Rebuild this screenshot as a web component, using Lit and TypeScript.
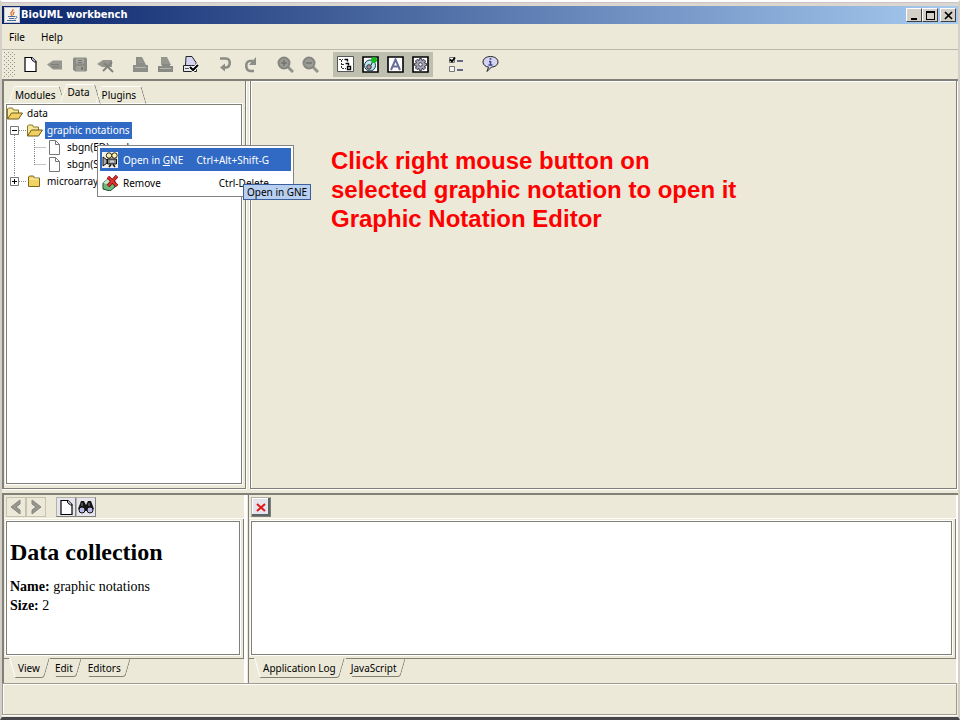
import { LitElement, html, svg, css, nothing, TemplateResult } from "lit";
import { customElement, property, state } from "lit/decorators.js";
import { classMap } from "lit/directives/class-map.js";

const ICONS: Record<string, TemplateResult> = {
  java: svg`<rect width="16" height="16" fill="#f4f2ec"/><path d="M.5 15.500V.5h15v15z" fill="none" stroke="#c4c8d4"/><path d="M9 2c1 2-3 3-2 5s1 1 1 2M10.500 5C9 6 9 7 9.500 8" fill="none" stroke="#e0702c" stroke-width="1.300"/><path d="M4 9.500h7M5 11.500h5M3 13.500h9M11.500 9.500c3 0 1 2-1 2.500" fill="none" stroke="#4a6a9c"/>`,
  doc: svg`<path d="M3 1.500h7l4 4v10H3z" fill="#fff" stroke="#000" stroke-width="1.200"/><path d="M10 1.500l4 4h-4z" fill="#c8c8e8"/><path d="M9.500 1.500v2l3 2.500h1.500" fill="none" stroke="#000"/>`,
  open: svg`<path d="M0 8.500l6-4 9 0v9H6z" fill="#96968e"/><path d="M4 8.500h8M5 11h7" stroke="#7e7e78"/>`,
  save: svg`<path d="M1 2.500l1-1h12l1 1v12l-1 1H3l-2-2z" fill="#8c8c86"/><path d="M4 2.500h8v5H4z" fill="#a6a69e"/><path d="M6 4.500h4M6 6.500h4" stroke="#787872"/><path d="M4 10h8v5H4z" fill="#a0a098"/><path d="M9 11h2v3H9z" fill="#787872"/>`,
  saveAs: svg`<path d="M0 8l6-4h9v7H5z" fill="#96968e"/><path d="M6 15l9-9M7 7l9 9" stroke="#82827c" stroke-width="2"/>`,
  print: svg`<path d="M4 1h6l4 8H4z" fill="#8e8e88"/><path d="M1 9h15v7H1z" fill="#8e8e88"/><path d="M3 11.500h11" stroke="#b6b6ac"/><path d="M6 4h4M6 6h5" stroke="#a0a098"/>`,
  preview: svg`<path d="M4 1h6l4 8H4z" fill="#96968e"/><path d="M1 10h4V8h8v2h3v6H1z" fill="#8a8a84"/><path d="M3 12.500h11" stroke="#b6b6ac"/>`,
  pageSetup: svg`<path d="M4 .5h6l4 6v3H3.500z" fill="#d4d4f2" stroke="#222"/><path d="M1.500 9.500h13v6h-13z" fill="#e8e8f0" stroke="#222"/><path d="M3 12.500h6" stroke="#555"/><path d="M8 11l3 3 5-5" fill="none" stroke="#fff" stroke-width="4"/><path d="M8 11l3 3 5-5" fill="none" stroke="#000" stroke-width="2"/>`,
  undo: svg`<path d="M3 2.500h6c5 0 5 8 0 9H7" fill="none" stroke="#8c8c86" stroke-width="2.600"/><path d="M8 7.500v8l-5-4z" fill="#8c8c86"/>`,
  redo: svg`<path d="M11 5H8c-5 0-5 9 0 10h4" fill="none" stroke="#8c8c86" stroke-width="2.600"/><path d="M14 1v8H7z" fill="#8c8c86"/>`,
  zoomIn: svg`<path d="M10 10l6 6" stroke="#94948e" stroke-width="3"/><circle cx="7" cy="7" r="5.500" fill="#9c9c96" stroke="#868680" stroke-width="2"/><path d="M4 7h6M7 4v6" stroke="#74746e" stroke-width="1.500"/>`,
  zoomOut: svg`<path d="M10 10l6 6" stroke="#94948e" stroke-width="3"/><circle cx="7" cy="7" r="5.500" fill="#9c9c96" stroke="#868680" stroke-width="2"/><path d="M4 7h6" stroke="#74746e" stroke-width="1.500"/>`,
  treeView: svg`<path d="M.5.5h16v15H.5z" fill="#fff" stroke="#555"/><path d="M2 3.500h4M4.500 4v9M5 8.500h3M5 12.500h4" fill="none" stroke="#333" stroke-dasharray="2 1"/><path d="M7.500 3.500h3v2M8.500 7.500h3v2" fill="none" stroke="#000" stroke-width="1.400"/><path d="M10.500 10.500h3v3h-3z" fill="#fff" stroke="#000" stroke-width="1.400"/>`,
  diagram: svg`<path d="M1 1h15v15H1z" fill="#fff" stroke="#000" stroke-width="1.600"/><circle cx="8" cy="9.500" r="5.500" fill="#bce6ee" stroke="#16364a"/><circle cx="7" cy="11" r="2.300" fill="#a88a92" stroke="#111" stroke-width=".8"/><path d="M9 9l2-4" stroke="#123"/><circle cx="12" cy="4" r="3" fill="#12ba20"/>`,
  letter: svg`<path d="M1 1h15v15H1z" fill="#fff" stroke="#000" stroke-width="1.600"/><path d="M4 14L8.500 3.500 13 14M5.500 10.500h6" fill="none" stroke="#6a6c98" stroke-width="2"/>`,
  gear: svg`<path d="M1 1h15v15H1z" fill="#fff" stroke="#000" stroke-width="1.600"/><path d="M7.500 2.500h2l.5 2 2-1 1.500 1.500-1 2 2 .5v2l-2 .5 1 2-1.500 1.500-2-1-.5 2h-2l-.5-2-2 1-1.500-1.500 1-2-2-.5v-2l2-.5-1-2 1.500-1.500 2 1z" fill="#a4a4b8" stroke="#2c2c38" stroke-width=".9"/><circle cx="8.500" cy="8.500" r="1.800" fill="#f2f2f8" stroke="#444"/>`,
  options: svg`<path d="M2.500 1.500h5v5h-5zM2.500 10.500h5v5h-5z" fill="#f4f4f4" stroke="#777"/><path d="M3 3.500l2 2 3-4" fill="none" stroke="#000" stroke-width="1.800"/><path d="M10 5h6M10 14h6" stroke="#666680" stroke-width="2"/>`,
  about: svg`<path d="M8.500 .5C4 .5 1 3 1 6s3 5 5.500 5L5 15.500 9.500 11C13 11 16 9 16 6s-3-5.500-7.500-5.500z" fill="#d4d4f0" stroke="#222"/><path d="M8.500 2v1.800M8.500 5v4M7 5.500h1.500M6.500 9h4" stroke="#44448e" stroke-width="1.600"/>`,
  folderOpen: svg`<path d="M.5 14V4l1-1h4l1 2h5v3" fill="#f6e69a" stroke="#8e7620"/><path d="M.5 14l4-6h11l-4 6z" fill="#f0d060" stroke="#6e5a16"/>`,
  folder: svg`<path d="M1.500 13.500V4l1-1h4l1 2h5v8.500z" fill="#f2d264" stroke="#7e681c"/><path d="M2.500 6h9" stroke="#fff4bc"/>`,
  file: svg`<path d="M2.500 1.500h6l4 4v10h-10z" fill="#fff" stroke="#777"/><path d="M8.500 1.500v4h4" fill="none" stroke="#777"/>`,
  camera: svg`<path d="M0 0h16v16H0z" fill="#f2f0ea"/><circle cx="7" cy="3.500" r="2.700" fill="#fff2aa" stroke="#222"/><circle cx="12.500" cy="3.500" r="2.700" fill="#fff2aa" stroke="#222"/><path d="M5.500 7h9v5h-9z" fill="#8a8a8a" stroke="#111"/><path d="M1 5l4 3v3l-4 3z" fill="#aaa" stroke="#111"/><path d="M8 8.500h4v2H8z" fill="#d0d0d0"/><path d="M7 15l2-2.500M13 15l-2-2.500" stroke="#111" stroke-width="1.500"/>`,
  remove: svg`<path d="M1 8l5-4 7 2v6l-5 4-7-2z" fill="#6cba7c" stroke="#1c4a2c"/><path d="M1 8l7 2 5-4-7-2z" fill="#c4e8c8"/><path d="M6 2l9 9M15 1l-9 10" stroke="#6a0e0e" stroke-width="3.500"/><path d="M6 2l9 9M15 1l-9 10" stroke="#e82e2e" stroke-width="2"/>`,
  back: svg`<path d="M12 1v4L8 8l4 3v4L3 8z" fill="#96968e" stroke="#86867e"/>`,
  forward: svg`<path d="M4 1v4l4 3-4 3v4l9-7z" fill="#96968e" stroke="#86867e"/>`,
  binoculars: svg`<path d="M3 2h3l2 4 2-4h3l3 8-7 2H7l-7-2z" fill="#151515"/><path d="M4 4v3M11 4v3" stroke="#888"/><circle cx="4" cy="11" r="3" fill="#b8bce4" stroke="#111"/><circle cx="12" cy="11" r="3" fill="#b8bce4" stroke="#111"/>`,
  cross: svg`<path d="M4 5l8 7M12 5l-8 7" stroke="#e01818" stroke-width="2"/>`,
  minimize: svg`<path d="M3 9h6v2H3z"/>`,
  maximize: svg`<path d="M2 2h9v9H2zM3 4v6h7V4z" fill-rule="evenodd"/>`,
  close: svg`<path d="M3 3l7 7M10 3l-7 7" stroke="#000" stroke-width="1.700"/>`,
};

@customElement("ui-icon")
class UiIcon extends LitElement {
  @property() name = "";
  @property({ type: Number }) size = 16;
  static styles = css`
    :host { display: block; flex: none; }
    svg { display: block; }
  `;
  render() {
    return html`<svg width=${this.size} height=${this.size} viewBox="0 0 ${this.size} ${this.size}" aria-hidden="true">${ICONS[this.name]}</svg>`;
  }
}

@customElement("tab-strip")
class TabStrip extends LitElement {
  @property({ attribute: false }) tabs: string[] = [];
  @property() placement = "top";
  @property({ type: Number }) selected = 0;
  static styles = css`
    :host { display: block; }
    .strip { display: flex; }
    button {
      position: relative; border: 0; background: none; margin: 0; color: #000;
      font: inherit; white-space: nowrap; box-sizing: border-box;
    }
    button::before, button::after { content: ""; position: absolute; box-sizing: border-box; }
    .top { align-items: flex-end; height: 20px; padding-left: 3px; }
    .top button { height: 18px; padding: 0 6px 1px; }
    .top button::before { top: 0; bottom: 0; left: 2px; right: 50%; border-left: 1px solid #fff; border-top: 1px solid #fff; transform: skewX(-18deg); border-top-left-radius: 2px; }
    .top button::after { top: 0; bottom: 0; left: 50%; right: -2px; border-right: 1px solid #808074; border-top: 1px solid #fff; transform: skewX(16deg); border-top-right-radius: 2px; }
    .top .before::after { bottom: 50%; right: 0; }
    .top .on { height: 20px; padding-bottom: 4px; }
    .bottom { border-top: 1px solid #808074; height: 24px; align-items: flex-start; padding-left: 6px; }
    .bottom button { height: 18px; padding: 0 10px 1px 5px; }
    .bottom button::before { top: 0; bottom: 0; left: 3px; right: 50%; border-left: 1px solid transparent; border-bottom: 1px solid #808074; transform: skewX(16deg); }
    .bottom button::after { top: 0; bottom: 0; left: 50%; right: 3px; border-right: 1px solid #808074; border-bottom: 1px solid #808074; transform: skewX(-16deg); border-bottom-right-radius: 3px; }
    .bottom .on { margin-top: -1px; height: 20px; padding: 0 10px 0 8px; background: #ece9d8; }
    .bottom .on::before { left: 2px; border-left-color: #fff; }
    span { position: relative; z-index: 1; }
  `;
  render() {
    return html`<div class=${"strip " + this.placement} role="tablist">
      ${this.tabs.map((t, i) => html`<button role="tab" aria-selected=${i === this.selected} class=${classMap({ on: i === this.selected, before: i < this.selected })}
        @click=${() => (this.selected = i)}><span>${t}</span></button>`)}
    </div>`;
  }
}

interface Node { label: string; icon: string; depth: number; toggle?: string; selected?: boolean; last?: boolean; }

@customElement("app-root")
class AppRoot extends LitElement {
  @state() private nodes: Node[] = [
    { label: "data", icon: "folderOpen", depth: 0 },
    { label: "graphic notations", icon: "folderOpen", depth: 1, toggle: "-", selected: true },
    { label: "sbgn(ED).xml", icon: "file", depth: 2 },
    { label: "sbgn(S).xml", icon: "file", depth: 2, last: true },
    { label: "microarray", icon: "folder", depth: 1, toggle: "+", last: true },
  ];

  private toolGroups = [
    ["doc:New", "open:Open", "save:Save", "saveAs:Save as"],
    ["print:Print", "preview:Print preview", "pageSetup:Page setup"],
    ["undo:Undo", "redo:Redo"],
    ["zoomIn:Zoom in", "zoomOut:Zoom out"],
    ["treeView:Tree", "diagram:Diagram", "letter:Text", "gear:Settings"],
    ["options:Options"],
    ["about:About"],
  ];

  static styles = css`
    :host { display: block; font: 10px/14px "Noto Sans", "Open Sans", sans-serif; color: #000; }
    * { box-sizing: border-box; }
    button { font: inherit; color: inherit; padding: 0; margin: 0; border: 0; background: none; display: grid; place-items: center; }
    .window {
      display: flex; flex-direction: column; min-height: 100vh; background: #ece9d8;
      border-top: 2px solid #fff; border-bottom: 3px solid #47444a;
      border-left: 2px solid #d4d0c8; border-right: 2px solid #d4d0c8;
    }
    .edge { height: 4px; border-top: 1px solid #cdc2c8; background: #dad7ce; }
    .title {
      display: flex; align-items: center; gap: 1px; height: 18px; padding: 0 2px 0 2px;
      background: linear-gradient(90deg, #0a246a, #a6caf0); color: #fff;
    }
    .title h1 { flex: 1; margin: 0; font: bold 11px/14px "DejaVu Sans Condensed", "DejaVu Sans", sans-serif; }
    .caption { width: 16px; height: 14px; background: #d4d0c8; border: 1px solid; border-color: #fff #404040 #404040 #fff; overflow: hidden; }
    .captions { display: flex; }
    .captions .caption:last-child { margin-left: 2px; }
    .menu { display: flex; gap: 16px; height: 26px; align-items: center; padding: 0 7px; border-bottom: 1px solid #bab8ab; }
    .tools { display: flex; align-items: center; gap: 10px; height: 29px; padding-left: 2px; }
    .grip { width: 11px; height: 25px; margin-right: -7px; display: block; }
    .group { display: flex; }
    .group.on { background: #bfbfb0; }
    .group button { width: 25px; height: 25px; }
    .cols { display: grid; grid-template-columns: minmax(0, 244fr) minmax(0, 708fr); gap: 4px; }
    .upper { flex: 1; position: relative; border-top: 2px solid #808078; }
    .pane { border: 1px solid #808078; border-top: 0; box-shadow: 1px 1px #fff; min-width: 0; display: flex; flex-direction: column; }
    .upper .pane { padding: 3px 3px 3px 2px; border-left-width: 2px; }
    .upper .right { margin-right: 1px; border-left-width: 1px; box-shadow: inset 1px 1px #fff, 1px 1px #fff, -1px 0 #fff; padding: 65px 20px 20px 80px; }
    .box { flex: 1; background: #fff; border: 1px solid #808078; box-shadow: 0 0 0 1px #fff; min-width: 0; }
    .upper .box { margin-bottom: 1px; }
    .note { margin: 0; font: bold 24px/29px "Liberation Sans", Arial, sans-serif; color: #f00; max-width: 410px; }
    .tree { list-style: none; margin: 0; padding: 0; }
    .row { display: flex; align-items: center; height: 17px; }
    .row .name { padding: 0 2px; line-height: 17px; margin-left: 1px; }
    .row .name.sel { background: #316ac5; color: #fff; }
    .cell { width: 20px; height: 17px; flex: none; }
    .lower { margin-top: 4px; border-top: 2px solid #808078; height: 190px; grid-template-columns: minmax(0, 242fr) minmax(0, 710fr); }
    .lower .side { border-left: 2px solid #808078; box-shadow: 3px 0 #fff; min-width: 0; display: flex; flex-direction: column; }
    .lower .main { border-left: 1px solid #808078; border-right: 2px solid #fff; min-width: 0; display: flex; flex-direction: column; }
    .bar { display: flex; height: 24px; padding: 2px; border-bottom: 1px solid #fff; align-items: flex-start; }
    .bar button { width: 20px; height: 20px; border: 1px solid #c6c3b0; }
    .bar button.raised { border: 1px solid #808078; border-top-color: #b4b2a8; border-left-color: #b4b2a8; background: #e6e4ec; }
    .bar .push { margin-left: 10px; }
    .bar .boxed { box-shadow: inset -2px -2px #5c6668, inset 1px 1px #fff; }
    .holder { flex: 1; display: flex; padding: 2px 3px 3px 2px; border-right: 1px solid #808078; }
    .doc { padding: 16px 3px; font: 14px/19px "Liberation Serif", "Times New Roman", serif; }
    .doc h2 { margin: 0 0 11px; font: bold 24px/28px "Liberation Serif", "Times New Roman", serif; }
    .doc p { margin: 0; }
    .status { height: 32px; border: 1px solid #a09c90; box-shadow: inset 1px 1px #fff, 0 1px #fff; margin-right: 1px; margin-bottom: 2px; }
    .popup {
      position: absolute; left: 95px; top: 64px; width: 197px; padding: 2px; background: #fff;
      border: 1px solid #848284; z-index: 2;
    }
    .popup button { display: flex; align-items: center; width: 100%; height: 23px; padding: 0 22px 0 2px; gap: 5px; }
    .popup .hot { background: #316ac5; color: #fff; }
    .popup .key { margin-left: auto; }
    .tip { position: absolute; left: 241px; top: 103px; height: 16px; padding: 0 3px; white-space: nowrap; background: #b8cff0; border: 1px solid #3a5f9c; z-index: 3; }
  `;

  private guide(n: Node) {
    if (n.depth === 0) return nothing;
    const dots = (d: string) => svg`<path d=${d} fill="none" stroke="#888" stroke-dasharray="1 1"/>`;
    const sign = n.toggle
      ? svg`<path d="M3.500 4.500h8v8h-8z" fill="#fff" stroke="#777"/><path d=${n.toggle === "+" ? "M5 8.500h5M7.500 6v5" : "M5 8.500h5"} stroke="#000"/>`
      : nothing;
    const outer = n.depth === 1
      ? dots(n.last ? "M7.500 0v4M12 8.500h8" : "M7.500 13v4M12 8.500h8")
      : dots("M7.500 0v17");
    return html`<svg class="cell" viewBox="0 0 20 17" aria-hidden="true">${outer}${sign}</svg>
      ${n.depth === 2 ? html`<svg class="cell" viewBox="0 0 20 17" aria-hidden="true">${dots(n.last ? "M7.500 0v9M7.500 8.500h12" : "M7.500 0v17M7.500 8.500h12")}</svg>` : nothing}`;
  }

  private grip() {
    return html`<svg class="grip" aria-hidden="true">
      <defs><pattern id="dots" width="4" height="4" patternUnits="userSpaceOnUse"><path d="M0 0h1v1H0zM2 2h1v1H2z" fill="#96948a"/></pattern></defs>
      <rect width="11" height="25" fill="url(#dots)"/>
    </svg>`;
  }

  render() {
    return html`<div class="window">
      <div class="edge"></div>
      <header class="title">
        <ui-icon name="java"></ui-icon><h1>BioUML workbench</h1>
        <div class="captions">
          ${["minimize", "maximize", "close"].map((n) => html`<button class="caption" aria-label=${n}><ui-icon name=${n} size="13"></ui-icon></button>`)}
        </div>
      </header>
      <nav class="menu"><button>File</button><button>Help</button></nav>
      <div class="tools" role="toolbar">
        ${this.grip()}
        ${this.toolGroups.map((g, i) => html`<div class=${classMap({ group: true, on: i === 4 })}>
          ${g.map((t) => { const [icon, label] = t.split(":"); return html`<button aria-label=${label}><ui-icon name=${icon} size="17"></ui-icon></button>`; })}
        </div>`)}
      </div>
      <main class="cols upper">
        <section class="pane">
          <tab-strip .tabs=${["Modules", "Data", "Plugins"]} .selected=${1}></tab-strip>
          <div class="box">
            <ul class="tree" role="tree">
              ${this.nodes.map((n) => html`<li class="row" role="treeitem">${this.guide(n)}<ui-icon name=${n.icon} size="17"></ui-icon><span class=${classMap({ name: true, sel: !!n.selected })}>${n.label}</span></li>`)}
            </ul>
          </div>
        </section>
        <section class="pane right">
          <p class="note">Click right mouse button on selected graphic notation to open it Graphic Notation Editor</p>
        </section>
        <div class="popup" role="menu">
          <button class="hot" role="menuitem"><ui-icon name="camera"></ui-icon><span>Open in <u>G</u>NE</span><span class="key">Ctrl+Alt+Shift-G</span></button>
          <button role="menuitem"><ui-icon name="remove"></ui-icon><span>Remove</span><span class="key">Ctrl-Delete</span></button>
        </div>
        <div class="tip" role="tooltip">Open in GNE</div>
      </main>
      <div class="cols lower">
        <section class="side">
          <div class="bar">
            <button aria-label="Back"><ui-icon name="back"></ui-icon></button><button aria-label="Forward"><ui-icon name="forward"></ui-icon></button>
            <button class="raised push" aria-label="Page"><ui-icon name="doc" size="17"></ui-icon></button><button class="raised" aria-label="Find"><ui-icon name="binoculars"></ui-icon></button>
          </div>
          <div class="holder"><article class="box doc"><h2>Data collection</h2><p><b>Name:</b> graphic notations</p><p><b>Size:</b> 2</p></article></div>
          <tab-strip placement="bottom" .tabs=${["View", "Edit", "Editors"]}></tab-strip>
        </section>
        <section class="main">
          <div class="bar"><button class="raised boxed" aria-label="Clear"><ui-icon name="cross"></ui-icon></button></div>
          <div class="holder"><div class="box"></div></div>
          <tab-strip placement="bottom" .tabs=${["Application Log", "JavaScript"]}></tab-strip>
        </section>
      </div>
      <footer class="status"></footer>
    </div>`;
  }
}
